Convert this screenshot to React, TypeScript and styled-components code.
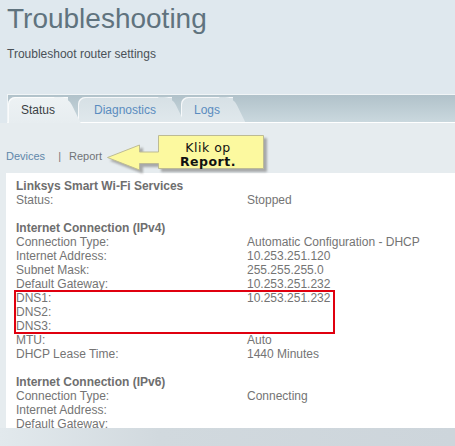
import React from "react";
import styled, { createGlobalStyle } from "styled-components";

const GlobalStyle = createGlobalStyle`
  html, body {
    margin: 0;
    padding: 0;
    background: #dfe8ee;
  }
  body {
    font-family: "Liberation Sans", Arial, sans-serif;
  }
`;

// Report rows
type Row = { label: string; value?: string; heading?: boolean; blank?: boolean };

const rows: Row[] = [
  { label: "Linksys Smart Wi-Fi Services", heading: true },
  { label: "Status:", value: "Stopped" },
  { label: "", blank: true },
  { label: "Internet Connection (IPv4)", heading: true },
  { label: "Connection Type:", value: "Automatic Configuration - DHCP" },
  { label: "Internet Address:", value: "10.253.251.120" },
  { label: "Subnet Mask:", value: "255.255.255.0" },
  { label: "Default Gateway:", value: "10.253.251.232" },
  { label: "DNS1:", value: "10.253.251.232" },
  { label: "DNS2:" },
  { label: "DNS3:" },
  { label: "MTU:", value: "Auto" },
  { label: "DHCP Lease Time:", value: "1440 Minutes" },
  { label: "", blank: true },
  { label: "Internet Connection (IPv6)", heading: true },
  { label: "Connection Type:", value: "Connecting" },
  { label: "Internet Address:" },
  { label: "Default Gateway:" },
];

const tabs = [
  { label: "Status", width: 60, ml: 0, active: true },
  { label: "Diagnostics", width: 94, ml: 10 },
  { label: "Logs", width: 52, ml: 9 },
];

// Page
const Page = styled.div`
  position: relative;
  width: 455px;
  height: 446px;
  overflow: hidden;
  display: flex;
  flex-direction: column;
  background: #dfe8ee;
`;

const Header = styled.header`
  padding: 0 7px;
`;

const Title = styled.h1`
  margin: 2px 0 0;
  font-size: 28px;
  line-height: 34px;
  font-weight: normal;
  color: #60737e;
`;

const Subtitle = styled.p`
  margin: 11px 0 0;
  font-size: 12px;
  line-height: 14px;
  color: #4a5157;
`;

// Tabs
const TabBar = styled.nav`
  margin: 33px 0 0 7px;
  height: 27px;
  display: flex;
  align-items: flex-end;
  border-top: 1px solid #f1f5f7;
  border-left: 1px solid #f1f5f7;
  border-bottom: 1px solid #ffffff;
  background: linear-gradient(to bottom, #b1c2ca, #cad8de);
`;

const Tab = styled.div<{ $active?: boolean; $w: number; $ml: number; $z: number }>`
  position: relative;
  z-index: ${(p) => p.$z};
  width: ${(p) => p.$w}px;
  margin-left: ${(p) => p.$ml}px;
  height: ${(p) => (p.$active ? 26 : 25)}px;
  margin-bottom: ${(p) => (p.$active ? -1 : 0)}px;
  display: flex;
  align-items: center;
  justify-content: center;
  padding-bottom: ${(p) => (p.$active ? 1 : 0)}px;
  box-sizing: border-box;
  font-size: 12px;
  color: ${(p) => (p.$active ? "#3a3f43" : "#5a8cbf")};
  background: ${(p) =>
    p.$active
      ? "linear-gradient(to bottom, #edf2f4, #e7edf0)"
      : "linear-gradient(to bottom, #d6e0e5, #e0e8ec)"};
  border-top-left-radius: 7px;
  box-shadow: inset 1px 1px 0 rgba(255, 255, 255, 0.75);

  span {
    position: relative;
    z-index: 1;
  }

  &::after {
    content: "";
    position: absolute;
    top: 0;
    bottom: 0;
    left: calc(100% - 14px);
    width: 14px;
    background: inherit;
    border-top-right-radius: 8px;
    transform: skewX(26deg);
    transform-origin: top left;
  }
`;

// Lower content
const Lower = styled.section`
  flex: 1;
  display: flex;
  flex-direction: column;
  background: #e6ecef;
`;

const SubNav = styled.div`
  margin: 27px 0 0 6px;
  display: flex;
  align-items: center;
  font-size: 11px;
  line-height: 13px;
`;

const NavLink = styled.span<{ $current?: boolean }>`
  color: ${(p) => (p.$current ? "#707478" : "#6087aa")};
`;

const Divider = styled.span`
  margin: 0 8px 0 13px;
  color: #777;
`;

const Panel = styled.div`
  position: relative;
  margin: 10px 0 0 6px;
  height: 255px;
  padding: 6px 0 0 10px;
  box-sizing: border-box;
  overflow: hidden;
  background: #ffffff;
`;

const InfoRow = styled.div<{ $heading?: boolean }>`
  display: grid;
  grid-template-columns: 231px 1fr;
  height: 14px;
  font-size: 12px;
  line-height: 14px;
  white-space: nowrap;
  color: ${(p) => (p.$heading ? "#6e6e6e" : "#747474")};
  font-weight: ${(p) => (p.$heading ? "bold" : "normal")};
`;

const Highlight = styled.div`
  position: absolute;
  left: 8px;
  top: 117px;
  width: 321px;
  height: 44px;
  box-sizing: border-box;
  border: 2px solid #e0000f;
`;

const Footer = styled.div`
  flex: 1;
  background: linear-gradient(to right, #e2e9ed 0%, #d1d9de 35%, #cdd5db 100%);
`;

// Callout
const Callout = styled.div`
  position: absolute;
  left: 100px;
  top: 128px;
  width: 175px;
  height: 50px;
`;

const CalloutText = styled.div`
  position: absolute;
  left: 58px;
  top: 7px;
  width: 100px;
  padding-top: 6px;
  text-align: center;
  font-family: "DejaVu Sans", Verdana, sans-serif;
  font-size: 12.5px;
  line-height: 14px;
  letter-spacing: 0.5px;
  color: #111;

  b {
    display: block;
  }
`;

const App: React.FC = () => {
  return (
    <>
      <GlobalStyle />
      <Page>
        <Header>
          <Title>Troubleshooting</Title>
          <Subtitle>Troubleshoot router settings</Subtitle>
        </Header>

        <TabBar>
          {tabs.map((t, i) => (
            <Tab key={t.label} $active={t.active} $w={t.width} $ml={t.ml} $z={tabs.length - i}>
              <span>{t.label}</span>
            </Tab>
          ))}
        </TabBar>

        <Lower>
          <SubNav>
            <NavLink>Devices</NavLink>
            <Divider>|</Divider>
            <NavLink $current>Report</NavLink>
          </SubNav>

          <Panel>
            {rows.map((r, i) => (
              <InfoRow key={i} $heading={r.heading}>
                <span>{r.label}</span>
                <span>{r.value ?? ""}</span>
              </InfoRow>
            ))}
            <Highlight />
          </Panel>

          <Footer />
        </Lower>

        <Callout>
          <svg width="175" height="50" viewBox="0 0 175 50">
            <defs>
              <filter id="shade" x="-10%" y="-20%" width="130%" height="160%">
                <feDropShadow dx="3" dy="3" stdDeviation="1.2" floodColor="#8c8c8c" floodOpacity="0.7" />
              </filter>
            </defs>
            <polygon
              points="58.5,7.5 163.5,7.5 163.5,40.5 58.5,40.5 58.5,35.5 39.5,35.5 39.5,42 7.5,29.5 39.5,17 39.5,24 58.5,24"
              fill="#fcf99f"
              stroke="#bdbb94"
              strokeWidth="1"
              filter="url(#shade)"
            />
          </svg>
          <CalloutText>
            Klik op
            <b>Report.</b>
          </CalloutText>
        </Callout>
      </Page>
    </>
  );
};

export default App;
